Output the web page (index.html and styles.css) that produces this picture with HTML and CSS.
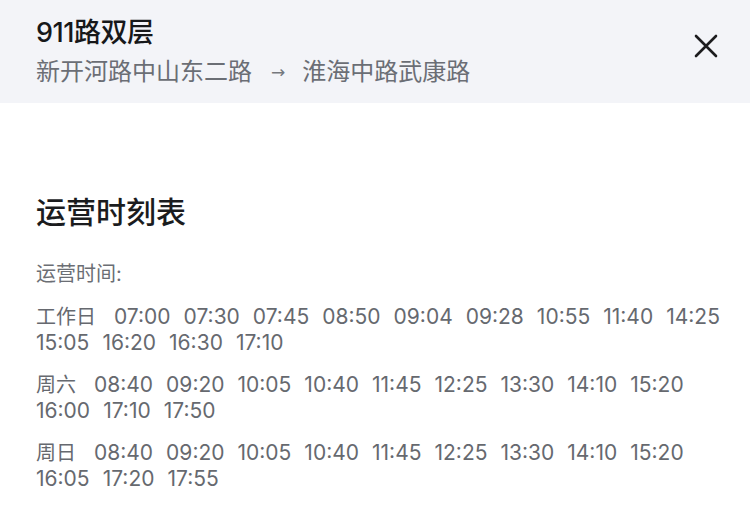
FILE: index.html
```html
<!DOCTYPE html>
<html lang="zh-CN">
<head>
<meta charset="utf-8">
<title>911路双层</title>
<link rel="stylesheet" href="styles.css">
</head>
<body>
<header class="header">
  <div class="header-text">
    <div class="title">911路双层</div>
    <div class="route"><span>新开河路中山东二路</span><span class="arrow">→</span><span>淮海中路武康路</span></div>
  </div>
  <button class="close" aria-label="关闭">
    <svg width="24" height="24" viewBox="0 0 24 24"><path d="M2 2 L22 22 M22 2 L2 22" stroke="#1c1c1e" stroke-width="2.6" stroke-linecap="round" fill="none"/></svg>
  </button>
</header>
<main class="content">
  <h1 class="heading">运营时刻表</h1>
  <div class="label">运营时间:</div>
  <div class="row"><span class="day">工作日</span><span class="t">07:00</span><span class="t">07:30</span><span class="t">07:45</span><span class="t">08:50</span><span class="t">09:04</span><span class="t">09:28</span><span class="t">10:55</span><span class="t">11:40</span><span class="t">14:25</span><span class="t">15:05</span><span class="t">16:20</span><span class="t">16:30</span><span class="t">17:10</span></div>
  <div class="row"><span class="day">周六</span><span class="t">08:40</span><span class="t">09:20</span><span class="t">10:05</span><span class="t">10:40</span><span class="t">11:45</span><span class="t">12:25</span><span class="t">13:30</span><span class="t">14:10</span><span class="t">15:20</span><span class="t">16:00</span><span class="t">17:10</span><span class="t">17:50</span></div>
  <div class="row"><span class="day">周日</span><span class="t">08:40</span><span class="t">09:20</span><span class="t">10:05</span><span class="t">10:40</span><span class="t">11:45</span><span class="t">12:25</span><span class="t">13:30</span><span class="t">14:10</span><span class="t">15:20</span><span class="t">16:05</span><span class="t">17:20</span><span class="t">17:55</span></div>
</main>
</body>
</html>
```
FILE: styles.css
```css
html, body {
  margin: 0;
  padding: 0;
  background: #ffffff;
}
body {
  font-family: Inter, "Noto Sans CJK SC", sans-serif;
  width: 750px;
  height: 515px;
  overflow: hidden;
}
.header {
  background: #f3f4f8;
  height: 103px;
  box-sizing: border-box;
  padding: 17px 32px 0 36px;
  display: flex;
  justify-content: space-between;
  align-items: flex-start;
}
.title {
  font-size: 27px;
  line-height: 32px;
  font-weight: 500;
  color: #17181a;
  letter-spacing: -0.5px;
}
.route {
  margin-top: 7px;
  font-size: 24px;
  line-height: 32px;
  color: #6b6e75;
  display: flex;
  align-items: center;
}
.arrow {
  font-family: "DejaVu Sans", sans-serif;
  font-size: 17px;
  margin: 0 17px 0 19px;
  color: #75787e;
}
.close {
  margin-top: 17px;
  width: 24px;
  height: 24px;
  padding: 0;
  border: 0;
  background: none;
  display: flex;
}
.content {
  padding: 0 8px 0 36px;
}
.heading {
  margin: 89px 0 0;
  font-size: 30px;
  line-height: 40px;
  font-weight: 500;
  color: #1b1c1e;
}
.label {
  margin-top: 30px;
  font-size: 20px;
  line-height: 25px;
  color: #6b6e74;
}
.row {
  margin-top: 17px;
  font-size: 21px;
  line-height: 25px;
  color: #66696f;
}
.day {
  font-size: 20px;
  margin-right: 18px;
}
.t {
  display: inline-block;
  margin-right: 13px;
}
```
